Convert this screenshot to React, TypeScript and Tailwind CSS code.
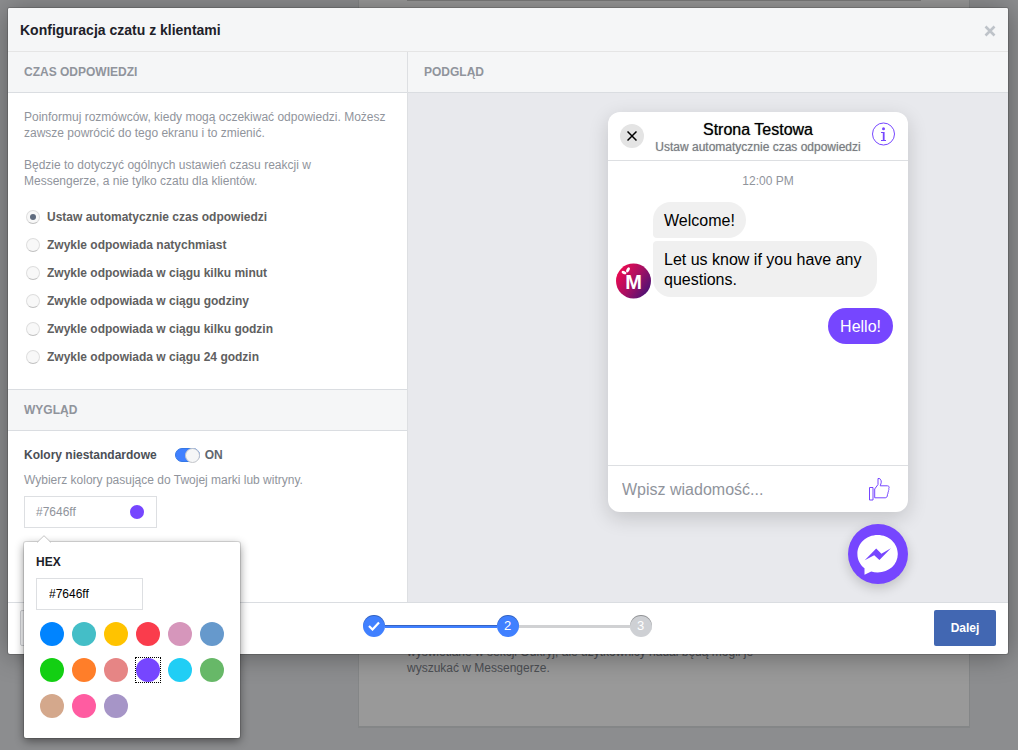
import { useState } from "react";

const responseTimes = [
  "Ustaw automatycznie czas odpowiedzi",
  "Zwykle odpowiada natychmiast",
  "Zwykle odpowiada w ciągu kilku minut",
  "Zwykle odpowiada w ciągu godziny",
  "Zwykle odpowiada w ciągu kilku godzin",
  "Zwykle odpowiada w ciągu 24 godzin",
];

const swatches = [
  { hex: "#0084ff", bg: "bg-[#0084ff]" },
  { hex: "#44bec7", bg: "bg-[#44bec7]" },
  { hex: "#ffc300", bg: "bg-[#ffc300]" },
  { hex: "#fa3c4c", bg: "bg-[#fa3c4c]" },
  { hex: "#d696bb", bg: "bg-[#d696bb]" },
  { hex: "#6699cc", bg: "bg-[#6699cc]" },
  { hex: "#13cf13", bg: "bg-[#13cf13]" },
  { hex: "#ff7e29", bg: "bg-[#ff7e29]" },
  { hex: "#e68585", bg: "bg-[#e68585]" },
  { hex: "#7646ff", bg: "bg-[#7646ff]" },
  { hex: "#20cef5", bg: "bg-[#20cef5]" },
  { hex: "#67b868", bg: "bg-[#67b868]" },
  { hex: "#d4a88c", bg: "bg-[#d4a88c]" },
  { hex: "#ff5ca1", bg: "bg-[#ff5ca1]" },
  { hex: "#a695c7", bg: "bg-[#a695c7]" },
];

function SectionTitle({ children }: { children: string }) {
  return (
    <h3 className="flex h-[41px] items-center border-b border-[#dadde1] bg-[#f5f6f7] px-4 text-xs font-bold text-[#90949c]">
      {children}
    </h3>
  );
}

function BackgroundPage() {
  return (
    <div className="flex min-h-screen justify-end pr-12 pb-[22px]">
      <div className="flex w-full max-w-[612px] flex-col justify-between border-x border-b-2 border-[#dddfe2] bg-white px-12">
        <hr className="border-[#cccccc]" />
        <p className="max-w-[370px] pb-[50px] text-xs leading-4 text-[#7f858d]">
          wyświetlane w sekcji Odkryj, ale użytkownicy nadal będą mogli je wyszukać w Messengerze.
        </p>
      </div>
    </div>
  );
}

function ResponseTime() {
  const [selected, setSelected] = useState(0);
  return (
    <section>
      <SectionTitle>CZAS ODPOWIEDZI</SectionTitle>
      <div className="px-4 pt-4 pb-[18px]">
        <div className="space-y-4 text-xs leading-4 text-[#90949c]">
          <p>Poinformuj rozmówców, kiedy mogą oczekiwać odpowiedzi. Możesz zawsze powrócić do tego ekranu i to zmienić.</p>
          <p className="max-w-[320px]">Będzie to dotyczyć ogólnych ustawień czasu reakcji w Messengerze, a nie tylko czatu dla klientów.</p>
        </div>
        <div className="mt-3.5">
          {responseTimes.map((label, i) => (
            <label key={label} className="flex h-7 items-center gap-[7px] pl-0.5 text-xs font-bold text-[#606060]">
              <input
                type="radio"
                name="response-time"
                checked={selected === i}
                onChange={() => setSelected(i)}
                className="grid size-3.5 appearance-none place-items-center rounded-full border border-[#dedede] border-b-[#c0c0c0] bg-[#f8f8f8] before:size-1.5 before:rounded-full checked:before:bg-[#5f6b7e]"
              />
              {label}
            </label>
          ))}
        </div>
      </div>
    </section>
  );
}

function ColorPicker({ color, onPick }: { color: string; onPick: (hex: string) => void }) {
  return (
    <div className="absolute top-full left-0 z-10 mt-3.5 w-[216px] rounded-xs bg-white p-3 pb-5 shadow-[0_0_0_1px_rgba(0,0,0,0.12),0_3px_10px_rgba(0,0,0,0.45)]">
      <svg className="absolute -top-[7px] left-3 h-2 w-4" viewBox="0 0 16 8">
        <path d="M1 8 8 1l7 7z" fill="#fff" />
        <path d="M1 7.5 8 .7l7 6.8" fill="none" stroke="#c4c4c4" />
      </svg>
      <label htmlFor="hex" className="block text-xs leading-4 font-bold text-[#1d2129]">
        HEX
      </label>
      <input
        id="hex"
        value={color}
        onChange={(e) => onPick(e.target.value)}
        className="mt-2 h-8 w-[107px] border border-[#dddfe2] px-3 text-xs text-black outline-none"
      />
      <div className="mt-3 flex flex-wrap gap-x-2 gap-y-3 px-1">
        {swatches.map(({ hex, bg }) => (
          <button
            key={hex}
            aria-label={hex}
            onClick={() => onPick(hex)}
            className={`${bg} size-6 rounded-full ${hex === color ? "relative after:absolute after:-inset-px after:border after:border-dotted after:border-black" : ""}`}
          />
        ))}
      </div>
    </div>
  );
}

function Appearance({ color, onPick }: { color: string; onPick: (hex: string) => void }) {
  const [on, setOn] = useState(true);
  return (
    <section className="border-t border-[#dadde1]">
      <SectionTitle>WYGLĄD</SectionTitle>
      <div className="px-4 pt-4 pb-[74px]">
        <label className="flex h-4 items-center text-xs font-bold text-[#4b4f56]">
          Kolory niestandardowe
          <input
            type="checkbox"
            role="switch"
            checked={on}
            onChange={() => setOn(!on)}
            className="ml-[18px] flex h-3.5 w-[25px] appearance-none items-center rounded-full border border-[#c4c6ca] bg-[#dddfe2] before:-mx-px before:size-[15px] before:shrink-0 before:rounded-full before:border before:border-[#c4c6ca] before:bg-[#f5f6f7] checked:justify-end checked:border-[#3578e5] checked:bg-[#4080ff]"
          />
          <span className="ml-[5px] text-[#606770]">ON</span>
        </label>
        <p className="mt-[9px] text-xs leading-4 text-[#90949c]">Wybierz kolory pasujące do Twojej marki lub witryny.</p>
        <div className="relative mt-2 w-[133px]">
          <button className="flex h-8 w-full items-center justify-between border border-[#dddfe2] pr-3 pl-[11px] text-xs text-[#90949c]">
            {color}
            <span className="size-3.5 rounded-full" style={{ backgroundColor: color }} />
          </button>
          <ColorPicker color={color} onPick={onPick} />
        </div>
      </div>
    </section>
  );
}

function Avatar() {
  return (
    <svg viewBox="0 0 36 36" className="-mb-0.5 size-9 shrink-0" aria-hidden="true">
      <defs>
        <linearGradient id="avatar" x1="0.05" y1="0.2" x2="0.95" y2="0.8">
          <stop offset="0" stopColor="#ee0a50" />
          <stop offset="0.5" stopColor="#a80f62" />
          <stop offset="1" stopColor="#4a1275" />
        </linearGradient>
      </defs>
      <circle cx="18.500" cy="18" r="17.500" fill="url(#avatar)" />
      <g fill="#fff">
        <ellipse cx="9" cy="9.600" rx="2.500" ry="1.500" transform="rotate(20 9 9.600)" />
        <ellipse cx="13" cy="6.800" rx="2.800" ry="1.500" transform="rotate(-60 13 6.800)" />
        <text x="18.500" y="26" textAnchor="middle" fontFamily="Liberation Sans, sans-serif" fontWeight="700" fontSize="20">
          M
        </text>
      </g>
    </svg>
  );
}

function ChatPreview({ color }: { color: string }) {
  return (
    <div className="flex flex-col items-end gap-3">
      <div className="flex h-[400px] w-[300px] flex-col rounded-xl bg-white shadow-[0_6px_20px_rgba(0,0,0,0.16)]">
        <div className="flex h-[49px] items-center justify-between border-b border-[#dddfe2] px-3">
          <button aria-label="Zamknij czat" className="grid size-6 place-items-center rounded-full bg-[#e4e4e4]">
            <svg viewBox="0 0 10 10" className="size-2.5" stroke="#000" strokeWidth="1.500">
              <path d="M.5.5l9 9M9.500.5l-9 9" />
            </svg>
          </button>
          <div className="pt-1 text-center">
            <h4 className="text-base leading-[18px] text-black [text-shadow:0_0_1px_rgba(0,0,0,0.6)]">Strona Testowa</h4>
            <p className="text-xs leading-4 whitespace-nowrap text-[#7a7d82] [text-shadow:0_0_1px_rgba(122,125,130,0.6)]">
              Ustaw automatycznie czas odpowiedzi
            </p>
          </div>
          <button aria-label="Informacje" className="pb-1" style={{ color }}>
            <svg viewBox="0 0 24 24" className="size-6" fill="none" stroke="currentColor">
              <circle cx="11.500" cy="12" r="11" />
              <circle cx="11.500" cy="6.800" r="1.500" fill="currentColor" stroke="none" />
              <path d="M9 10.500h3M9 18.500h5" />
              <path d="M11.700 10v8.500" strokeWidth="1.800" />
            </svg>
          </button>
        </div>
        <div className="flex flex-1 flex-col pt-3 pr-[15px] pl-[7px]">
          <time className="pl-7 text-center text-xs leading-4 text-[#90949c]">12:00 PM</time>
          <div className="mt-[13px] flex items-end gap-0.5 text-base leading-5 text-black">
            <Avatar />
            <div className="flex flex-col items-start gap-[3px]">
              <p className="rounded-[18px] rounded-bl-sm bg-[#f0f0f0] px-[11px] pt-[9px] pb-[7px]">Welcome!</p>
              <p className="max-w-[224px] rounded-[18px] rounded-tl-sm bg-[#f0f0f0] px-[11px] pt-[9px] pb-[7px]">
                Let us know if you have any questions.
              </p>
            </div>
          </div>
          <p className="mt-[11px] self-end rounded-[18px] px-3 pt-[9px] pb-[7px] text-base leading-5 text-white" style={{ backgroundColor: color }}>
            Hello!
          </p>
        </div>
        <div className="flex h-[47px] items-center border-t border-[#dddfe2] pr-[17px] pl-3.5">
          <input
            aria-label="Wiadomość"
            placeholder="Wpisz wiadomość..."
            className="min-w-0 flex-1 bg-transparent pt-0.5 text-base outline-none placeholder:text-[#90949c]"
          />
          <button aria-label="Lubię to" style={{ color }}>
            <svg viewBox="0 0 22 24" className="h-6 w-[22px]" fill="none" stroke="currentColor">
              <path d="M.5 10.500h3.500v12.500H.5z" />
              <path d="M5.700 20.800V12L9 7.500V1.500h1.700l1.500 2.300v2l-1 3h7.200c1.200 0 1.900.8 1.700 1.900-.1.600-.4.900-.4 1 .3.600.3 1.400-.3 2 .2.800 0 1.500-.5 2.100.2.800-.1 1.400-.5 1.900.1 1.900-.7 3.100-2.200 3.100z" />
            </svg>
          </button>
        </div>
      </div>
      <button aria-label="Messenger" className="size-[60px] rounded-full shadow-[0_4px_12px_rgba(0,0,0,0.18)]" style={{ backgroundColor: color }}>
        <svg viewBox="0 0 60 60" className="size-full">
          <path fill="#fff" d="M29.700 11C18.300 11 9.400 19.300 9.400 30c0 5.800 2.700 10.900 7.100 14.300v6.400l6.700-3.200c2 .6 4.200.9 6.500.9 11.300 0 20.100-7.900 20.100-18.400S41 11 29.700 11z" />
          <path fill={color} d="M16.700 36.200 28.200 24.600l5.200 5.200 9.500-5.600L31.400 36.100l-5.200-4.900z" />
        </svg>
      </button>
    </div>
  );
}

function Stepper() {
  const circle = "grid size-[22px] place-items-center rounded-full text-[13px] text-white";
  return (
    <ol className="flex items-center pt-[5px] pr-0.5">
      <li className={`${circle} bg-[#4080ff] shadow-[inset_0_1px_0_rgba(0,0,0,0.25)]`}>
        <svg viewBox="0 0 12 10" className="h-2.5 w-3" fill="none" stroke="#fff" strokeWidth="2.200">
          <path d="M1 5l3.500 3.500L11 1.500" />
        </svg>
      </li>
      <li className="h-[3px] w-28 border-t border-[#3664c4] bg-[#4080ff]" />
      <li className={`${circle} bg-[#4080ff] shadow-[inset_0_1px_0_rgba(0,0,0,0.25)]`}>2</li>
      <li className="h-[3px] w-[111px] bg-[#d0d1d3]" />
      <li className={`${circle} bg-[#ced0d4] shadow-[inset_0_1px_0_rgba(0,0,0,0.3)]`}>3</li>
    </ol>
  );
}

export default function App() {
  const [color, setColor] = useState("#7646ff");
  return (
    <div className="relative min-h-screen overflow-hidden bg-[#e9ebee] font-['Liberation_Sans',Arial,sans-serif]">
      <BackgroundPage />
      <div className="absolute inset-0 bg-black/40 pt-2 pr-2.5 pl-2">
        <div role="dialog" aria-labelledby="dialog-title" className="rounded-xs bg-white shadow-[0_0_0_1px_rgba(0,0,0,0.15),0_2px_26px_rgba(0,0,0,0.35)]">
          <header className="flex h-11 items-center justify-between rounded-t-xs border-b border-[#e5e5e5] bg-[#f5f6f7] px-3">
            <h2 id="dialog-title" className="text-sm font-bold text-[#1d2129]">
              Konfiguracja czatu z klientami
            </h2>
            <button aria-label="Zamknij" className="mt-0.5">
              <svg viewBox="0 0 12 12" className="size-3" stroke="#bec3c9" strokeWidth="2.600">
                <path d="M1.500 1.500l9 9M10.500 1.500l-9 9" />
              </svg>
            </button>
          </header>
          <div className="flex">
            <div className="w-[400px] shrink-0 border-r border-[#dddfe2]">
              <ResponseTime />
              <Appearance color={color} onPick={setColor} />
            </div>
            <section className="flex flex-1 flex-col bg-[#e8e9ed]">
              <SectionTitle>PODGLĄD</SectionTitle>
              <div className="flex justify-end pt-[19px] pr-[100px]">
                <ChatPreview color={color} />
              </div>
            </section>
          </div>
          <footer className="flex h-[52px] items-start justify-between border-t border-[#dadde1] px-3 pt-[7px]">
            <button className="h-9 w-[62px] rounded-xs border border-[#ced0d4] bg-[#f6f7f9] text-xs font-bold text-[#4b4f56]">Wstecz</button>
            <Stepper />
            <button className="h-9 w-[62px] rounded-xs bg-[#4267b2] text-xs font-bold text-white">Dalej</button>
          </footer>
        </div>
      </div>
    </div>
  );
}
